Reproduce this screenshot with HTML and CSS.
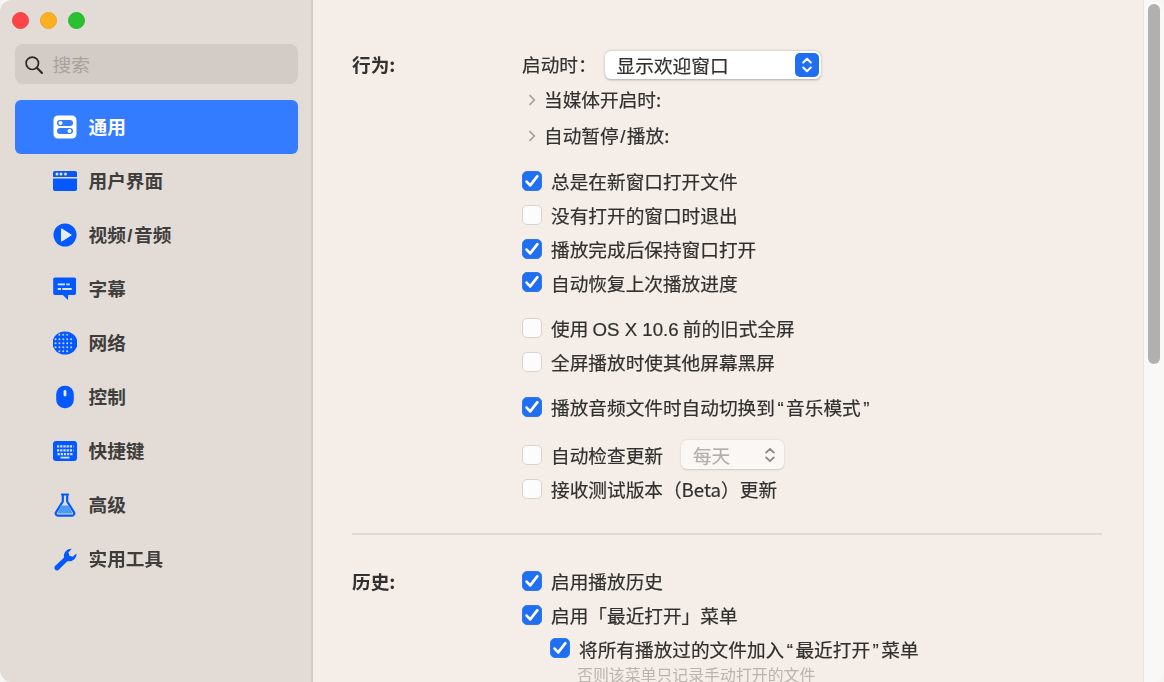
FILE: index.html
```html
<!DOCTYPE html>
<html lang="zh-CN">
<head>
<meta charset="utf-8">
<title>偏好设置</title>
<link rel="stylesheet" href="styles.css">
</head>
<body>
<div class="window">
  <aside class="sidebar">
    <div class="traffic">
      <span class="light red"></span><span class="light yellow"></span><span class="light green"></span>
    </div>
    <div class="search">
      <svg class="search-icon" width="20" height="20" viewBox="0 0 20 20"><circle cx="8.300" cy="8.300" r="6.200" fill="none" stroke="#2b2a29" stroke-width="1.700"/><path d="M12.800 12.800 L18 18" stroke="#2b2a29" stroke-width="2.100" stroke-linecap="round"/></svg>
      <span>搜索</span>
    </div>
    <nav class="nav">
      <div class="nav-item selected">
        <span class="nav-icon"><svg width="24" height="24" viewBox="0 0 24 24"><rect x="0.500" y="0.500" width="23" height="23" rx="4.500" fill="#fff"/><rect x="4" y="5" width="16" height="6" rx="3" fill="#337cff"/><rect x="4" y="13" width="16" height="6" rx="3" fill="#337cff"/><circle cx="7.500" cy="8" r="2" fill="#fff"/><circle cx="16.500" cy="16" r="2" fill="#fff"/></svg></span>
        <span class="nav-label">通用</span>
      </div>
      <div class="nav-item">
        <span class="nav-icon"><svg width="24" height="24" viewBox="0 0 24 24"><path d="M2 2h20a2 2 0 0 1 2 2v4H0V4a2 2 0 0 1 2-2z" fill="#0a57f0"/><path d="M0 9.500h24V20a2 2 0 0 1-2 2H2a2 2 0 0 1-2-2z" fill="#0458ff"/><circle cx="4" cy="5" r="1.500" fill="#dbe6fb"/><circle cx="8" cy="5" r="1.500" fill="#dbe6fb"/><circle cx="12.500" cy="5" r="1.500" fill="#dbe6fb"/></svg></span>
        <span class="nav-label">用户界面</span>
      </div>
      <div class="nav-item">
        <span class="nav-icon"><svg width="24" height="24" viewBox="0 0 24 24"><circle cx="12" cy="12" r="11.500" fill="#0458ff"/><path d="M8.500 5.800 L18.300 12 L8.500 18.200z" fill="#e6edfa" stroke="#e6edfa" stroke-width="1" stroke-linejoin="round"/></svg></span>
        <span class="nav-label">视频<span class="lat slash">/</span>音频</span>
      </div>
      <div class="nav-item">
        <span class="nav-icon"><svg width="24" height="24" viewBox="0 0 24 24"><path d="M1.800 0.500h19.600a1.600 1.600 0 0 1 1.600 1.600v14.200a1.600 1.600 0 0 1-1.600 1.600h-6.200l-0.200 5-5.200-5H1.800a1.600 1.600 0 0 1-1.600-1.600V2.100A1.600 1.600 0 0 1 1.800 0.500z" fill="#0458ff"/><path d="M4.700 7.300h7.300M13.300 7.300h3.400M4.700 12h3.300M9.300 12h9.400" stroke="#dbe6fb" stroke-width="1.800"/></svg></span>
        <span class="nav-label">字幕</span>
      </div>
      <div class="nav-item">
        <span class="nav-icon"><svg width="24" height="24" viewBox="0 0 24 24"><ellipse cx="12" cy="12" rx="12.500" ry="11.500" fill="#0458ff"/><g stroke="#c3d5fa" stroke-width="1.900" stroke-linecap="round" stroke-dasharray="0.100 3.800" fill="none"><path d="M6.300 3.800H18"/><path d="M2.500 8.300H21.500"/><path d="M2.500 12.300H21.500"/><path d="M2.500 16.300H21.500"/><path d="M6.300 20.300H18"/></g></svg></span>
        <span class="nav-label">网络</span>
      </div>
      <div class="nav-item">
        <span class="nav-icon"><svg width="24" height="24" viewBox="0 0 24 24"><rect x="3.200" y="0.800" width="17.600" height="22.400" rx="8.500" fill="#0458ff"/><rect x="10.600" y="5" width="2.800" height="6.500" rx="1.400" fill="#e6edfa"/></svg></span>
        <span class="nav-label">控制</span>
      </div>
      <div class="nav-item">
        <span class="nav-icon"><svg width="24" height="24" viewBox="0 0 24 24"><rect x="0" y="2" width="24" height="20" rx="3" fill="#0458ff"/><g stroke="#d7e3fb" stroke-width="2.200" stroke-dasharray="2.200 1"><path d="M4 7.300H20.500"/><path d="M4 11.300H20.500"/></g><path d="M4.500 15.200h15" stroke="#d7e3fb" stroke-width="2.200" stroke-dasharray="2.200 1"/><path d="M7.500 18.600h9" stroke="#d7e3fb" stroke-width="1.800"/></svg></span>
        <span class="nav-label">快捷键</span>
      </div>
      <div class="nav-item">
        <span class="nav-icon"><svg width="24" height="24" viewBox="0 0 24 24"><path d="M9 1.500h6M9.800 1.500V8.500L3 19.300a2.200 2.200 0 0 0 1.900 3.300h14.200a2.200 2.200 0 0 0 1.900-3.300L14.200 8.500V1.500" fill="none" stroke="#0458ff" stroke-width="2.200" stroke-linecap="round" stroke-linejoin="round"/><path d="M8.300 12.500h7.400L19.500 20.500h-15z" fill="#4a9af5"/></svg></span>
        <span class="nav-label">高级</span>
      </div>
      <div class="nav-item">
        <span class="nav-icon"><svg width="24" height="24" viewBox="0 0 24 24"><path d="M1.800 19.300 L11.100 10.500 C10 6 13.400 1.500 18.800 1.700 L15.400 5.600 L16.400 8.800 L19.600 9.800 L23.500 6.400 C23.900 11.500 19 15.500 14.600 14 L5.200 23.200 C3 24.400 0.500 21.700 1.800 19.300z" fill="#0458ff"/></svg></span>
        <span class="nav-label">实用工具</span>
      </div>
    </nav>
  </aside>
  <main class="content">
    <div class="panel">
      <section class="section">
        <div class="section-title">行为:</div>
        <div class="section-body">
          <div class="row">
            <span class="label-start">启动时：</span>
            <span class="popup">
              <span>显示欢迎窗口</span>
              <span class="stepper"><svg width="12" height="18" viewBox="0 0 12 18"><path d="M2.200 6.500 L6 2.800 L9.800 6.500 M2.200 11.500 L6 15.200 L9.800 11.500" fill="none" stroke="#fff" stroke-width="2" stroke-linecap="round" stroke-linejoin="round"/></svg></span>
            </span>
          </div>
          <div class="row disclosure"><svg class="chevron" width="8" height="12" viewBox="0 0 8 12"><path d="M1.500 1.200 L6.300 6 L1.500 10.800" fill="none" stroke="#a5a19e" stroke-width="1.700"/></svg><span>当媒体开启时:</span></div>
          <div class="row disclosure"><svg class="chevron" width="8" height="12" viewBox="0 0 8 12"><path d="M1.500 1.200 L6.300 6 L1.500 10.800" fill="none" stroke="#a5a19e" stroke-width="1.700"/></svg><span>自动暂停<span class="lat slash">/</span>播放:</span></div>

          <div class="group first-group">
            <div class="row"><span class="check on"></span><span>总是在新窗口打开文件</span></div>
            <div class="row"><span class="check"></span><span>没有打开的窗口时退出</span></div>
            <div class="row"><span class="check on"></span><span>播放完成后保持窗口打开</span></div>
            <div class="row"><span class="check on"></span><span>自动恢复上次播放进度</span></div>
          </div>
          <div class="group">
            <div class="row"><span class="check"></span><span>使用 <span class="lat">OS X 10.6</span> 前的旧式全屏</span></div>
            <div class="row"><span class="check"></span><span>全屏播放时使其他屏幕黑屏</span></div>
          </div>
          <div class="group">
            <div class="row"><span class="check on"></span><span>播放音频文件时自动切换到<span class="lat quote">“</span>音乐模式<span class="lat quote">”</span></span></div>
          </div>
          <div class="group update-group">
            <div class="row">
              <span class="check"></span><span>自动检查更新</span>
              <span class="popup-disabled"><span>每天</span><svg width="12" height="18" viewBox="0 0 12 18"><path d="M2.200 6.500 L6 2.800 L9.800 6.500 M2.200 11.500 L6 15.200 L9.800 11.500" fill="none" stroke="#8f8b88" stroke-width="1.800" stroke-linecap="round" stroke-linejoin="round"/></svg></span>
            </div>
            <div class="row"><span class="check"></span><span>接收测试版本（Beta）更新</span></div>
          </div>
        </div>
      </section>
      <hr class="divider">
      <section class="section">
        <div class="section-title history-title">历史:</div>
        <div class="section-body history-body">
          <div class="row"><span class="check on"></span><span>启用播放历史</span></div>
          <div class="row"><span class="check on"></span><span>启用「最近打开」菜单</span></div>
          <div class="row nested"><span class="check on"></span><span>将所有播放过的文件加入<span class="lat quote">“</span>最近打开<span class="lat quote">”</span>菜单</span></div>
          <div class="note">否则该菜单只记录手动打开的文件</div>
        </div>
      </section>
    </div>
    <div class="scrollbar"><div class="thumb"></div></div>
  </main>
</div>
</body>
</html>
```
FILE: styles.css
```css
* { box-sizing: border-box; }
html, body { margin: 0; height: 100%; overflow: hidden; background: #f7f5f3; }
body {
  font-family: "Noto Sans CJK SC", "Noto Sans", sans-serif;
  font-size: 18.67px;
  font-weight: 400;
  -webkit-text-stroke: 0.2px currentColor;
  color: #31302e;
}
.window {
  display: flex;
  width: 1164px;
  height: 682px;
  border-radius: 12px;
  overflow: hidden;
  background: #f4ede8;
  filter: blur(0.4px);
}
.sidebar {
  flex: 0 0 313px;
  background: #e3dcd6;
  border-right: 2px solid #d2ccc7;
  padding: 12px 13px 0 14.500px;
  display: flex;
  flex-direction: column;
}
.traffic { display: flex; gap: 11px; margin-left: -2.500px; }
.light { width: 17px; height: 17px; border-radius: 50%; }
.red { background: #ff4547; border: 0.500px solid #e5484a; }
.yellow { background: #ffb020; border: 0.500px solid #e8a526; }
.green { background: #2ac130; border: 0.500px solid #2bb532; }
.search {
  margin-top: 15px;
  height: 40px;
  background: #d2cbc6;
  border-radius: 8px;
  display: flex;
  align-items: center;
  padding-left: 9px;
  gap: 9px;
  color: #a7a29e;
  -webkit-text-stroke: 0;
}
.search-icon { flex: none; margin-top: 1px; }
.search span { padding-bottom: 2px; }
.nav { margin-top: 15.500px; display: flex; flex-direction: column; }
.nav-item {
  height: 54px;
  border-radius: 6px;
  display: flex;
  align-items: center;
  padding-left: 38px;
  gap: 12px;
  font-weight: 700;
  color: #403e3c;
  -webkit-text-stroke: 0;
}
.nav-label { padding-bottom: 2px; }
.nav-item.selected { background: #337cff; color: #fff; }
.nav-icon { width: 24px; height: 24px; flex: none; display: block; }
.nav-icon svg { display: block; }
.lat { font-family: "Liberation Sans", sans-serif; }
.slash { margin: 0 1.500px; }
.quote { margin: 0 2.500px; }

.content { flex: 1; display: flex; min-width: 0; }
.panel { flex: 1; padding: 0 41px 0 39px; min-width: 0; }
.section { display: grid; grid-template-columns: 170px 1fr; }
.section-title { font-weight: 700; line-height: 34px; padding-top: 47px; color: #33312f; -webkit-text-stroke: 0; }
.section-body { padding-top: 47px; }
.history-title, .history-body { padding-top: 29px; }
.row {
  height: 33.800px;
  display: flex;
  align-items: center;
  gap: 9px;
  white-space: nowrap;
}
.label-start { width: 82.600px; flex: none; margin-right: -9px; }
.popup {
  width: 216.500px;
  height: 28px;
  margin-top: 2px;
  background: #fff;
  border-radius: 6px;
  box-shadow: 0 0.500px 2.500px rgba(0,0,0,.28);
  display: flex;
  align-items: center;
  justify-content: space-between;
  padding: 0 2px 0 12px;
}
.stepper {
  width: 24px;
  height: 24px;
  border-radius: 5px;
  background: #1f6ff0;
  display: flex;
  align-items: center;
  justify-content: center;
}
.disclosure { gap: 8px; padding-left: 6px; height: 36px; }
.chevron { flex: none; margin-top: 2px; }
.group { margin-top: 11.600px; }
.first-group { margin-top: 11.300px; }
.update-group { margin-top: 14px; }
.check {
  width: 20px;
  height: 20px;
  flex: none;
  border-radius: 5px;
  background: #fdfcfb;
  border: 1px solid #d8d3cf;
}
.check.on {
  background-color: #1f6ff0;
  border-color: #3079f2;
  background-image: url("data:image/svg+xml,%3Csvg xmlns='http://www.w3.org/2000/svg' viewBox='0 0 18 18'%3E%3Cpath d='M3.600 9.600 L7.200 13.400 L14.400 4.200' fill='none' stroke='white' stroke-width='2.700' stroke-linecap='round' stroke-linejoin='round'/%3E%3C/svg%3E");
  background-size: 18px 18px;
}
.popup-disabled {
  margin-left: 9px;
  width: 103px;
  height: 29px;
  background: #faf7f5;
  border-radius: 6px;
  box-shadow: 0 0.500px 2px rgba(0,0,0,.16);
  color: #b3aeaa;
  display: flex;
  align-items: center;
  justify-content: space-between;
  padding: 0 8px 0 12px;
}
.divider {
  margin: 27.500px 0 0;
  border: 0;
  height: 2px;
  background: #e0d9d4;
}
.nested { padding-left: 28px; }
.note {
  font-size: 15.900px;
  color: #b9b4b0;
  padding-left: 55px;
  padding-top: 1px;
  line-height: 18px;
  -webkit-text-stroke: 0;
}
.scrollbar {
  flex: 0 0 21px;
  background: #faf8f7;
  border-left: 1px solid #e8e3df;
  padding: 4px 3px 0 4px;
}
.thumb {
  width: 12px;
  height: 360px;
  border-radius: 6px;
  background: #b2b0ae;
}
```
